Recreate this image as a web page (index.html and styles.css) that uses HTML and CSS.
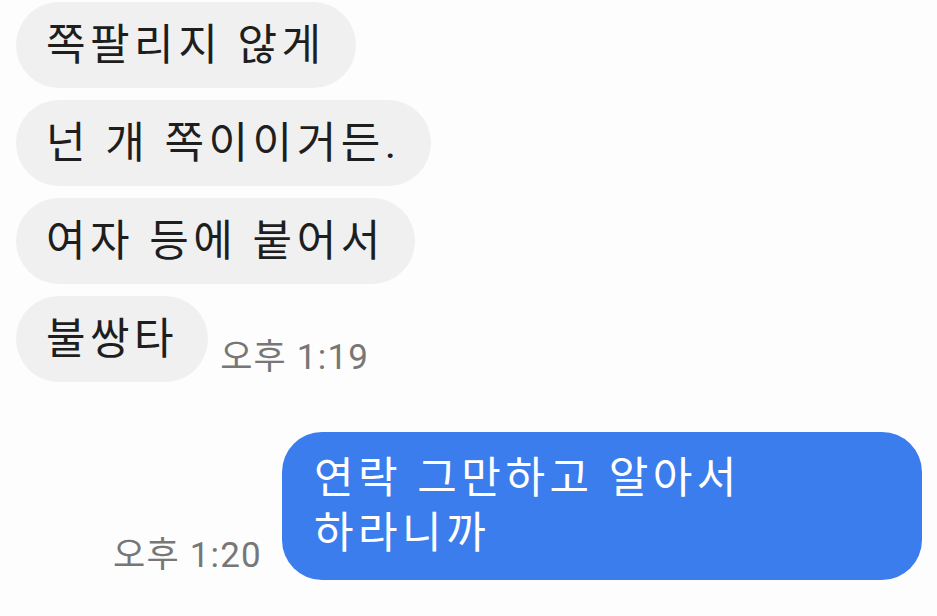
FILE: index.html
```html
<!DOCTYPE html>
<html lang="ko">
<head>
  <meta charset="UTF-8" />
  <meta name="viewport" content="width=device-width, initial-scale=1.0"/>
  <title>채팅</title>
  <link rel="stylesheet" href="styles.css">
</head>
<body>

  <!-- Chat -->
  <div class="chat">
    <div class="row received">
      <div class="bubble">쪽팔리지 않게</div>
    </div>
    <div class="row received">
      <div class="bubble">넌 개 쪽이이거든.</div>
    </div>
    <div class="row received">
      <div class="bubble">여자 등에 붙어서</div>
    </div>
    <div class="row received">
      <div class="bubble">불쌍타</div>
      <div class="time">오후 1:19</div>
    </div>

    <div class="row sent">
      <div class="time">오후 1:20</div>
      <div class="bubble">연락 그만하고 알아서<br>하라니까</div>
    </div>
  </div>

</body>
</html>
```

FILE: styles.css
```css
  * {
    box-sizing: border-box;
  }

  body {
    margin: 0;
    background: #fdfdfd;
    font-family: Roboto, "Noto Sans CJK KR", sans-serif;
  }

  .chat {
    display: flex;
    flex-direction: column;
    gap: 12px;
    padding: 2px 15px 0 16px;
  }

  .row {
    display: flex;
    align-items: flex-end;
    gap: 12px;
  }

  .bubble {
    font-size: 43px;
    line-height: 54px;
    padding: 16px 30px;
    border-radius: 44px;
    background: #f0f0f0;
    color: #1e1e1e;
    letter-spacing: 4.5px;
  }

  .time {
    font-size: 35px;
    line-height: 40px;
    color: #777;
    padding-bottom: 4px;
    letter-spacing: 1.2px;
  }

  /* my messages */
  .sent {
    justify-content: flex-end;
    gap: 20px;
    margin-top: 38px;
  }

  .sent .bubble {
    width: 640px;
    background: #3b7ded;
    color: #fff;
    border-radius: 40px;
    padding: 19px 32px;
    line-height: 55px;
  }
```
